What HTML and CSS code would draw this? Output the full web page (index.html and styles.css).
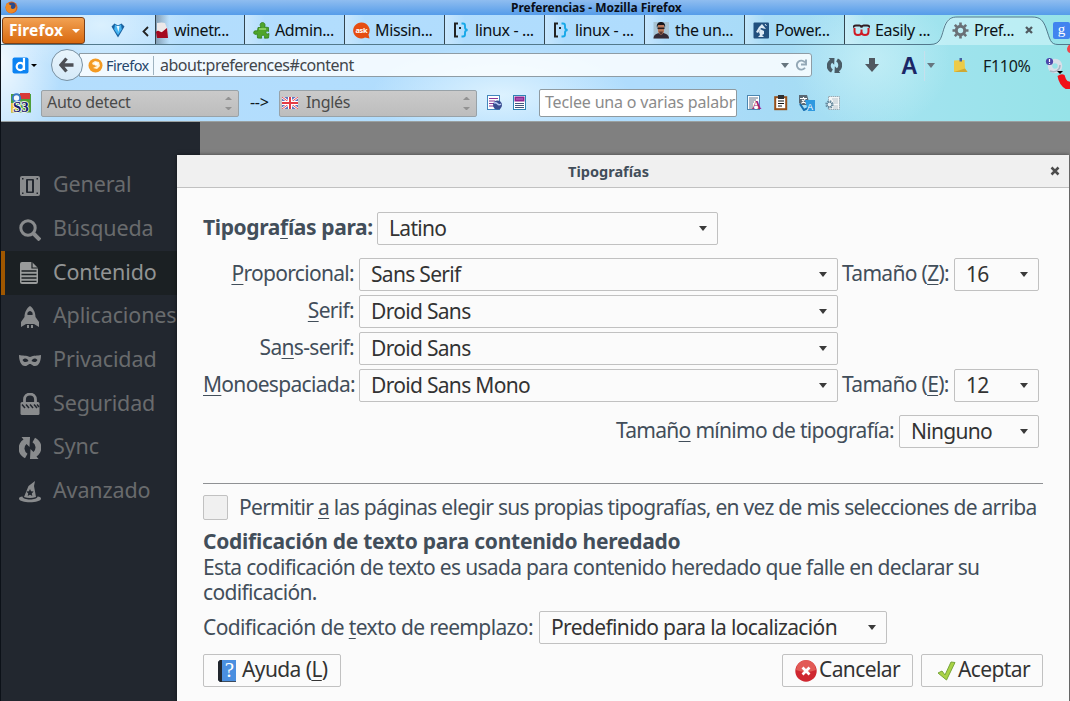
FILE: index.html
```html
<!DOCTYPE html>
<html lang="es">
<head>
<meta charset="utf-8">
<title>Preferencias - Mozilla Firefox</title>
<link rel="stylesheet" href="styles.css">
</head>
<body>
<div class="window">
  <header class="chrome">
    <div class="titlebar">
      <svg class="ff-logo" viewBox="0 0 13 13"><circle cx="6.500" cy="6.500" r="6" fill="#d9621b"/><circle cx="7" cy="5" r="3.600" fill="#2b4a8c"/><path d="M1 4c1-2 2-2 2.500-2 .5 2 2 2 3 2.500-1 1.500-1 3 1 3.500 2 0 3-1 3.500-3 1 3-1 7-5 7S0 8 1 4z" fill="#f08a24"/></svg>
      <span class="window-title">Preferencias - Mozilla Firefox</span>
    </div>
    <div class="tabstrip">
      <div class="app-button"><span>Firefox</span><i class="tri white"></i></div>
      <div class="pinned"><svg width="14" height="15" viewBox="0 0 14 15"><path d="M.5 3.500L3.500.5 7 2.500 10.500.5l3 3L10 9.500 7 14.500 4 9.500z" fill="#1a62a0"/><path d="M4 1.500l3 2 3-2 .8 5L7 12 3.200 6.500z" fill="#45b4f2"/><path d="M5.500 3h3L7.500 9z" fill="#e4f8ff"/></svg></div>
      <div class="scroll"><svg width="7" height="11" viewBox="0 0 7 11"><path d="M6 1L1.500 5.500 6 10" fill="none" stroke="#222" stroke-width="1.800"/></svg></div>
      <div class="tab first"><svg class="tico" viewBox="0 0 17 17"><path d="M1 1q5-1 8 0l3 8-5 3-6-3z" fill="#ece8e8"/><path d="M0 10c3-3 4 1 6 0s3-3 5-4l1 10H1z" fill="#a5091f"/></svg><span>winetr...</span></div>
      <div class="tab"><svg class="tico" viewBox="0 0 17 17"><path d="M5 5.500h3C6 2 8 .5 9.500.5S13 2 11.500 5l4 .5v4c-2-1-3 0-2.500 1.500s2 1 3 .5l-.5 4.500-4 .2c.6-2-.2-3-1.500-3s-2 1-1.300 3L4.500 16l-.3-4C2 13 .5 12 .7 10.300S3 8.500 4.500 9z" fill="#4fa52c" stroke="#2f7c17" stroke-width=".8"/><path d="M6 7h7" stroke="#9bdb70" stroke-width="1.500"/></svg><span>Admin...</span></div>
      <div class="tab"><svg class="tico" viewBox="0 0 17 17"><path d="M8.500.5a8 8 0 1 0 3.500 15l4.500 1-1-4A8 8 0 0 0 8.500.5z" fill="#e64d12"/><text x="8.300" y="11" text-anchor="middle" class="ask">ask</text></svg><span>Missin...</span></div>
      <div class="tab"><svg class="tico" viewBox="0 0 17 17"><path d="M5 1.500H2v13h3" fill="none" stroke="#222" stroke-width="2"/><rect x="6" y="5" width="2" height="2" fill="#222"/><path d="M8.500 1.500h1.500q2 0 2 2v2q0 2 2.500 2.500Q12 8.500 12 10.500v2q0 2-2 2H8.500" fill="none" stroke="#17a8e8" stroke-width="1.900"/></svg><span>linux - ...</span></div>
      <div class="tab"><svg class="tico" viewBox="0 0 17 17"><path d="M5 1.500H2v13h3" fill="none" stroke="#222" stroke-width="2"/><rect x="6" y="5" width="2" height="2" fill="#222"/><path d="M8.500 1.500h1.500q2 0 2 2v2q0 2 2.500 2.500Q12 8.500 12 10.500v2q0 2-2 2H8.500" fill="none" stroke="#17a8e8" stroke-width="1.900"/></svg><span>linux - ...</span></div>
      <div class="tab"><svg class="tico" viewBox="0 0 17 17"><rect x=".5" width="15.500" height="16.500" fill="#a8c4d4"/><path d="M.5 16.500c0-4 3-5 6-5.500h4c4 1 5.500 3 5.500 5.500z" fill="#352b36"/><path d="M5 3h6v7l-2 2.500H7L5 10z" fill="#ba7a5c"/><path d="M4 6c-1-5 2-6 4-6s5 1 4 6l-1-3H5z" fill="#17171c"/><path d="M4.500 5.500h7v1.600h-7z" fill="#281c1c"/><path d="M6 9.500h4L9 12H7z" fill="#5a3830"/></svg><span>the un...</span></div>
      <div class="tab"><svg class="tico" viewBox="0 0 17 17"><rect x=".5" y=".5" width="15.500" height="16" rx="1" fill="#21507e"/><path d="M9 2l4 5-5-1-3 5-2-1 3-5z" fill="#dceaf5"/><path d="M7 7l4 2v3l-2 1 2 2H5l2-2-1-3z" fill="#dceaf5"/><path d="M12 2l1.500 2" stroke="#dceaf5"/></svg><span>Power...</span></div>
      <div class="tab easily"><svg class="tico" viewBox="0 0 17 17"><path d="M1.500 6v3.500Q1.500 13 5 13t3.500-3.500V7.500v2Q8.500 13 12 13t3.500-3.500V6" fill="none" stroke="#cf1b25" stroke-width="2"/><path d="M0 5.500Q1 3.500 3 3.500h3.500q1.500 0 2 2 .5-2 2-2H14q2 0 3 2" fill="none" stroke="#321c22" stroke-width="2"/></svg><span>Easily ...</span></div>
      <div class="active-tab">
        <svg width="17" height="17" viewBox="-8.500 -8.500 17 17"><circle r="4.200" fill="none" stroke="#6a7076" stroke-width="3"/><path d="M0-8v2.500M0 8V5.500M-8 0h2.500M8 0H5.500M-5.700-5.700l2 2M5.700 5.700l-2-2M-5.700 5.700l2-2M5.700-5.700l-2 2" stroke="#6a7076" stroke-width="2.600"/></svg><span>Pref...</span><svg class="close-x" width="8" height="8" viewBox="0 0 8 8"><path d="M1 1l6 6M7 1L1 7" stroke="#505a60" stroke-width="2.300"/></svg>
      </div>
      <div class="google"><span>g</span></div>
      <svg class="tab-outline" width="1070" height="31" viewBox="0 0 1070 31"><path d="M930 30c12 0 10-10 14-20 3-7 7-8 12-8h76c8 0 11 3 14 11 4 11 4 17 12 17z" fill="#d8f7fb" opacity=".55"/><path d="M0 29.500h930c12 0 11-9 15-19 3-7 7-8.500 12-8.500h75c8 0 11 3 14 11 4 11 4 16.500 12 16.500h12" fill="none" stroke="#52798c" stroke-width="1"/></svg>
    </div>
    <div class="navbar">
      <div class="d-button"><svg width="17" height="17" viewBox="0 0 17 17"><rect x=".5" y=".5" width="16" height="16" rx="2" fill="#0d83f2"/><circle cx="8.300" cy="9.500" r="3.600" fill="none" stroke="#fff" stroke-width="2.200"/><path d="M12 1v12" stroke="#fff" stroke-width="2.200"/></svg><i class="tri black"></i></div>
      <div class="back"><svg width="16" height="16" viewBox="0 0 16 16"><path d="M7.500 1.500L2 8l5.500 6.500M2.500 8H14.500" fill="none" stroke="#4c4f55" stroke-width="3.300"/></svg></div>
      <div class="urlbar">
        <svg class="identity" width="15" height="15" viewBox="0 0 15 15"><circle cx="7.500" cy="7.500" r="7" fill="#f39a22"/><path d="M4 5l3-2 4 1 1 4-3 3-4-1 2-1 2-1-1-2-3 1z" fill="#fff3d8"/><circle cx="8" cy="6" r="1.800" fill="#fff"/></svg>
        <span class="id-name">Firefox</span>
        <span class="url">about:preferences#content</span>
        <i class="tri gray"></i>
        <svg width="12" height="12" viewBox="0 0 12 12"><path d="M10 3.500A4.500 4.500 0 1 0 10 8.700M6 5.500h5V.5" fill="none" stroke="#93a8b6" stroke-width="1.900"/></svg>
      </div>
      <svg class="sync-btn" viewBox="0 0 22 22"><path d="M11 0H2.500l2 2.600A10.500 10.500 0 0 0 4 20l2 1.200 2.500-4.500A6 6 0 0 1 7.500 7l3 3zM11 22h8.500l-2-2.600A10.500 10.500 0 0 0 18 2L16 .8l-2.500 4.500a6 6 0 0 1 1 9.700l-3-3z" fill="#4a5c66"/></svg>
      <svg class="down-btn" width="14" height="15" viewBox="0 0 14 15"><path d="M4 0h6v6h4l-7 8-7-8h4z" fill="#505860"/></svg>
      <span class="font-a">A</span>
      <span class="font-drop"><i class="tri gray"></i></span>
      <svg class="note" width="15" height="16" viewBox="0 0 15 16"><path d="M1 2.500L11.500 2l.5 8.500 2.500 3.500H1z" fill="#eccb49"/><path d="M1 14l11-3.500 2.500 3.500z" fill="#cfa935"/><path d="M6.500 0h2.500v3.500H6.500z" fill="#435fa0"/></svg>
      <span class="zoom">F110%</span>
      <svg class="throbber" width="26" height="46" viewBox="1044 42 26 46"><circle cx="1055" cy="65" r="5" fill="none" stroke="#d9dfe9" stroke-width="4.500"/><path d="M1050 70c6 2 10-1 10-6" fill="none" stroke="#a7b4c4" stroke-width="1.500"/><circle cx="1049.500" cy="60.500" r="3.600" fill="#4b46aa"/><path d="M1049.500 58v3M1049.500 62v1" stroke="#fff" stroke-width="1.200"/><path d="M1057 70h6l-3 3z" fill="#000"/><path d="M1057.500 75q4-3 7-1 1 4 3 6l3 1v9q-11-3-13-15z" fill="#f11119"/><path d="M1067 47.500q1-4 4-4.500v9q-4 0-4-4.500z" fill="#f24348"/></svg>
    </div>
    <div class="toolbar">
      <svg class="s3" width="20" height="20" viewBox="0 0 20 20"><rect x="0" y="1" width="20" height="18.500" fill="#4d9f3b"/><rect x="9" y="0" width="10" height="6" fill="#d83939"/><rect x="0" y="10" width="6" height="9.500" fill="#e7c33b"/><circle cx="5.500" cy="5" r="3.700" fill="#f3f8fe" stroke="#3c79c8" stroke-width="2"/><text x="2" y="18.500" class="s3-text">S3</text></svg>
      <div class="lang-select"><span>Auto detect</span><i class="spin"></i></div>
      <span class="arrow">--&gt;</span>
      <div class="lang-select"><svg width="16" height="12" viewBox="0 0 16 12"><rect width="16" height="12" fill="#6476be"/><path d="M0 0l16 12M16 0L0 12" stroke="#fff" stroke-width="2.500"/><path d="M0 0l16 12M16 0L0 12" stroke="#e55259"/><path d="M8 0v12M0 6h16" stroke="#fff" stroke-width="4"/><path d="M8 0v12M0 6h16" stroke="#e43a44" stroke-width="2"/></svg><span>Inglés</span><i class="spin"></i></div>
      <svg class="t1" width="16" height="16" viewBox="0 0 16 16"><rect x=".5" y=".5" width="12" height="14" fill="#fff" stroke="#4387bd"/><path d="M2 3.500h9M2 6h6M2 8.500h5M2 11h5" stroke="#8c3796" stroke-width="1.200"/><circle cx="10.500" cy="10" r="4.500" fill="#3b4d91"/><path d="M7 8c4-2 3 4 7 1" fill="none" stroke="#b8c8f1" stroke-width="1.500"/></svg>
      <svg class="t2" width="14" height="16" viewBox="0 0 14 16"><rect x=".5" y=".5" width="12" height="14" fill="#fff" stroke="#2f83b4"/><rect x="1.500" y="1.500" width="10" height="5" fill="#8d2793"/><path d="M2 8.500h9M2 10.500h9M2 12.500h9" stroke="#42587f"/><path d="M3 4h7" stroke="#c27ac5"/></svg>
      <div class="word-input">Teclee una o varias palabr</div>
      <svg class="t3" width="16" height="16" viewBox="0 0 16 16"><rect x=".5" y=".5" width="12" height="14" fill="#fff" stroke="#4b86b1"/><path d="M2 3h9M2 5h7M2 7h5M2 9h4M2 11h4M2 13h5" stroke="#62748b"/><text x="5" y="14" class="serif-a">A</text></svg>
      <svg class="t4" width="14" height="16" viewBox="0 0 14 16"><rect x="1.200" y="2.200" width="11" height="12" fill="#fff" stroke="#96501b" stroke-width="2"/><rect x="4" y="0" width="6" height="4" fill="#2d3034"/><path d="M4 6h6M4 8.500h6M4 11h4" stroke="#111" stroke-width="1.200"/></svg>
      <svg class="t5" width="16" height="16" viewBox="0 0 16 16"><path d="M0 0h8l3 10H2L0 8z" fill="#596873"/><path d="M1 3.500h7M4.500 2v2M2.500 8.500l4-5M3 5l4 3.500" fill="none" stroke="#fff" stroke-width="1.200"/><path d="M6 5h10v11H9z" fill="#2f9ae0"/><path d="M1 9l4 6 4-2" fill="none" stroke="#176eb0" stroke-width="2"/><text x="8" y="14.500" class="trans-a">A</text></svg>
      <svg class="t6" width="15" height="16" viewBox="0 0 15 16"><path d="M3.500 1.500h11v13h-11z" fill="#f4f7f8" stroke="#98abb4" stroke-dasharray="1.500 .6"/><path d="M7 4h6M8 6h5M9 8h4M9 11h4M8 13h5" stroke="#b6c3ca"/><circle cx="4.500" cy="9.500" r="3.200" fill="none" stroke="#67899d" stroke-width="2" stroke-dasharray="1.500 1"/><circle cx="4.500" cy="9.500" r="2.300" fill="#e8f3f8" stroke="#67899d"/></svg>
    </div>
  </header>

  <main class="content">
    <nav class="sidebar">
      <a class="item"><svg viewBox="0 0 22 22"><path d="M3 1h16a2 2 0 0 1 2 2v16a2 2 0 0 1-2 2H3a2 2 0 0 1-2-2V3a2 2 0 0 1 2-2z" fill="#898b8d"/><rect x="7" y="4" width="8" height="14" rx="1" fill="#22272f"/><rect x="9" y="5.500" width="4" height="11" fill="#898b8d"/><path d="M3 3h1.500v1.500H3zM17.500 3H19v1.500h-1.500zM3 17.500h1.500V19H3zM17.500 17.500H19V19h-1.500z" fill="#22272f"/></svg><span>General</span></a>
      <a class="item"><svg viewBox="0 0 22 22"><circle cx="9" cy="9" r="7.200" fill="none" stroke="#898b8d" stroke-width="3"/><path d="M14 14l7 7" stroke="#898b8d" stroke-width="4"/></svg><span>Búsqueda</span></a>
      <a class="item selected"><svg viewBox="0 0 22 22"><path d="M3 0h10l6 6v14a2 2 0 0 1-2 2H3a2 2 0 0 1-2-2V2a2 2 0 0 1 2-2z" fill="#999b9b"/><path d="M13 0v6h6" fill="none" stroke="#1b2023" stroke-width="1.200"/><path d="M2.500 9h15M2.500 12.500h15M2.500 16h15M2.500 19.300h15" stroke="#1b2023" stroke-width="1.300"/></svg><span>Contenido</span></a>
      <a class="item"><svg viewBox="0 0 22 22"><path d="M11 0C8 2 5.500 6 5.500 11L2 16v5l5-3h8l5 3v-5l-3.500-5C16.500 6 14 2 11 0z" fill="#898b8d"/><path d="M11 5a3 3 0 0 1 2.500 4h-5A3 3 0 0 1 11 5z" fill="#22272f"/><path d="M8 19h2v3H8zM12 19h2v3h-2z" fill="#898b8d"/></svg><span>Aplicaciones</span></a>
      <a class="item"><svg viewBox="0 0 22 22"><path d="M0 5c4 1 7 0 11 2 4-2 7-1 11-2 0 6-2 11-6 11-3 0-3-2-5-2s-2 2-5 2C2 16 0 11 0 5z" fill="#898b8d"/><path d="M3.500 10c3-3 5-1 6 1-3 2-5 1-6-1zM18.500 10c-3-3-5-1-6 1 3 2 5 1 6-1z" fill="#22272f"/></svg><span>Privacidad</span></a>
      <a class="item"><svg viewBox="0 0 22 22"><path d="M5.500 10V6.500a5.500 5.500 0 0 1 11 0V10" fill="none" stroke="#898b8d" stroke-width="2.800"/><rect x="1.500" y="9" width="19" height="13" rx="1.500" fill="#898b8d"/><path d="M3 11.500l3 3.500M7 11.500l3 3.500M11 11.500l3 3.500M15 11.500l3 3.500M18 11.500l2 2.500" stroke="#22272f" stroke-width="1.500"/></svg><span>Seguridad</span></a>
      <a class="item"><svg viewBox="0 0 22 22"><path d="M11 0H2.500l2 2.600A10.500 10.500 0 0 0 4 20l2 1.200 2.500-4.500A6 6 0 0 1 7.500 7l3 3zM11 22h8.500l-2-2.600A10.500 10.500 0 0 0 18 2L16 .8l-2.500 4.500a6 6 0 0 1 1 9.700l-3-3z" fill="#898b8d"/></svg><span>Sync</span></a>
      <a class="item"><svg viewBox="0 0 22 22"><path d="M5 16L9.500 5 16 0l-1 5 2 11q-6 2-12 0z" fill="#898b8d"/><path d="M11 8l1.100 2.300 2.500.3-1.800 1.800.5 2.600-2.300-1.200L8.700 15l.5-2.600-1.800-1.800 2.500-.3z" fill="#22272f"/><path d="M3.500 15.500c-2.500 0-3.500 1-3.500 2 0 5 22 5 22 0 0-1-1-2-3.500-2 0 4-15 4-15 0z" fill="#898b8d"/></svg><span>Avanzado</span></a>
    </nav>

    <section class="dialog">
      <div class="dialog-title"><span>Tipografías</span><svg width="10" height="10" viewBox="0 0 10 10"><path d="M1.500 1.500l7 7M8.500 1.500l-7 7" stroke="#4c4c4c" stroke-width="2.500"/></svg></div>
      <div class="dialog-body">
        <div class="row script-row"><b class="script-label">Tipogra<u>f</u>ías para:</b><div class="select script-select"><span>Latino</span><i class="tri"></i></div></div>
        <div class="fonts-grid">
          <label><u>P</u>roporcional:</label><div class="select"><span>Sans Serif</span><i class="tri"></i></div><label class="size">Tamaño (<u>Z</u>):</label><div class="select"><span>16</span><i class="tri"></i></div>
          <label><u>S</u>erif:</label><div class="select"><span>Droid Sans</span><i class="tri"></i></div><b></b><b></b>
          <label>Sa<u>n</u>s-serif:</label><div class="select"><span>Droid Sans</span><i class="tri"></i></div><b></b><b></b>
          <label><u>M</u>onoespaciada:</label><div class="select"><span>Droid Sans Mono</span><i class="tri"></i></div><label class="size">Tamaño (<u>E</u>):</label><div class="select"><span>12</span><i class="tri"></i></div>
        </div>
        <div class="row min-row"><label>Tamañ<u>o</u> mínimo de tipografía:</label><div class="select min-select"><span>Ninguno</span><i class="tri"></i></div></div>
        <div class="rule"></div>
        <div class="row check-row"><i class="checkbox"></i><label>Permitir <u>a</u> las páginas elegir sus propias tipografías, en vez de mis selecciones de arriba</label></div>
        <h2>Codificación de texto para contenido heredado</h2>
        <p>Esta codificación de texto es usada para contenido heredado que falle en declarar su<br>codificación.</p>
        <div class="row enc-row"><label>Codificación de <u>t</u>exto de reemplazo:</label><div class="select enc-select"><span>Predefinido para la localización</span><i class="tri"></i></div></div>
        <div class="row buttons">
          <div class="button help"><svg width="20" height="24" viewBox="0 0 20 24"><path d="M3 1h16v22H3L1 21V3z" fill="#3d4c5e"/><path d="M5 1h14v21H5z" fill="#4a8fe0"/><path d="M1 3l2-2h2v22H3l-2-2z" fill="#22272e"/><text x="12" y="18" text-anchor="middle" class="help-q">?</text></svg><span>Ayuda (<u>L</u>)</span></div>
          <div class="button cancel"><svg width="22" height="22" viewBox="0 0 22 22"><circle cx="11" cy="11" r="10.700" fill="#cf2730"/><path d="M1 10a10 10 0 0 1 20 0q-10 4-20 0z" fill="#e25a55"/><path d="M7.500 7.500l7 7M14.500 7.500l-7 7" stroke="#fff" stroke-width="2.700"/></svg><span>Cancelar</span></div>
          <div class="button accept"><svg width="19" height="20" viewBox="0 0 19 20"><path d="M1 12l4-2 3 4 6-13 4 .5L9.500 19z" fill="#a9d245" stroke="#77a63a"/></svg><span>Aceptar</span></div>
        </div>
      </div>
    </section>
  </main>
</div>
</body>
</html>
```
FILE: styles.css
```css
* { box-sizing: border-box; }
body { margin: 0; font-family: "Noto Sans", "Open Sans", sans-serif; }
svg { flex: none; display: block; }
.window { width: 1070px; height: 701px; overflow: hidden; border-left: 1px solid #0c1118; display: flex; flex-direction: column; }

/* browser chrome */
.chrome {
  height: 122px; flex: none; border-bottom: 1px solid #9aa0a0;
  background:
    radial-gradient(ellipse 60px 110px at 0 60px, rgba(255,255,255,.8), transparent),
    radial-gradient(ellipse 90px 50px at 100px 25px, rgba(235,248,255,.7), transparent),
    radial-gradient(ellipse 130px 50px at 500px 95px, rgba(225,244,255,.9), transparent),
    radial-gradient(ellipse 80px 70px at 870px 60px, rgba(205,242,248,.7), transparent),
    linear-gradient(90deg, #b5defd 0, #afdcfd 60%, #a7dbf6 72%, #a2e3ef 85%, #96e3e8 100%);
}
.titlebar { height: 15px; display: flex; align-items: center; background: linear-gradient(#8fbdf0, #559ce9); }
.ff-logo { width: 13px; height: 13px; margin-left: 4px; }
.window-title { margin-left: 493px; font-size: 12px; font-weight: 700; line-height: 15px; white-space: nowrap; letter-spacing: -.03px; color: #0a0f18; }
.tabstrip { height: 30px; display: flex; position: relative; font-size: 16px; color: #0c1216; }
.tab-outline { position: absolute; left: -1px; top: 0; z-index: 0; pointer-events: none; }
.app-button { width: 83px; height: 27px; margin: 2px 0 0 1px; padding: 0 4px 0 6px; border: 1px solid #7a401a; border-radius: 3px; background: linear-gradient(#f2a253, #d9690f); color: #fff; font-size: 15.500px; font-weight: 700; line-height: 24px; display: flex; align-items: center; justify-content: space-between; letter-spacing: .1px; }
.app-button span { padding-bottom: 1px; }
.tri { display: block; width: 0; height: 0; flex: none; border: 4.500px solid transparent; border-top: 5px solid #3a3a3a; border-bottom: 0; }
.tri.white { border-width: 4px; border-top-color: #fff; border-bottom: 0; }
.tri.black { border-width: 3px; border-top-color: #000; border-bottom: 0; }
.tri.gray { border-top-color: #66757e; }
.pinned { width: 54px; padding: 8px 0 0 26px; }
.scroll { width: 16px; padding: 11px 0 0 3px; }
.tab { width: 100px; height: 30px; display: flex; align-items: center; gap: 5px; padding-left: 8px; border-left: 1px solid #32444f; background: linear-gradient(90deg, rgba(255,255,255,.3), transparent 20%); white-space: nowrap; letter-spacing: -.37px; }
.tab.first { width: 89px; padding-left: 0; gap: 1px; background: linear-gradient(90deg, rgba(70,90,110,.5), transparent 15%); }
.tico { width: 17px; height: 17px; }
.active-tab { display: flex; align-items: center; width: 103px; padding-left: 8px; gap: 5px; position: relative; z-index: 1; letter-spacing: -.4px; }
.close-x { margin-left: 6px; }
.google { width: 17px; height: 17px; margin-top: 7px; margin-left: 6px; background: #4184ef; border-radius: 2px; color: #fff; font: 15px/14px "Liberation Serif", serif; text-align: center; flex: none; position: relative; z-index: 1; }
.ask { font: 700 7.500px "Noto Sans", sans-serif; fill: #fff; }

.navbar { height: 41px; display: flex; align-items: center; }
.d-button { width: 50px; padding-left: 11px; display: flex; align-items: center; gap: 2px; }
.back { width: 32px; height: 32px; border: 1px solid #7991a2; border-radius: 50%; background: linear-gradient(#e9f5fc, #d5e9f8); display: grid; place-items: center; flex: none; position: relative; z-index: 1; margin-bottom: 1px; }
.urlbar { width: 733px; height: 24px; margin-left: -4px; margin-bottom: 1px; border: 1px solid #8e9ca5; border-radius: 0 3px 3px 0; background: rgba(252,254,255,.86); display: flex; align-items: center; padding: 0 4px 0 8px; flex: none; color: #41464c; }
.id-name { width: 48px; height: 19px; margin-left: 3px; border-right: 1px solid #9eb3c0; font-size: 14.500px; line-height: 18px; letter-spacing: -.5px; color: #25466c; }
.url { margin-left: 6px; padding-bottom: 1px; font-size: 16px; line-height: 20px; letter-spacing: -.48px; flex: 1; }
.urlbar .tri { margin-right: 6px; }
.sync-btn { width: 15px; height: 15px; margin-left: 15px; }
.down-btn { margin-left: 23px; }
.font-a { width: 22px; margin-left: 22px; font: 700 23px/26px "Liberation Sans", sans-serif; color: #1b2767; }
.font-drop { width: 12px; height: 30px; display: flex; align-items: center; border-left: 1px solid #c5e0ec; padding-left: 2px; flex: none; margin-left: 1px; }
.note { margin-left: 17px; }
.zoom { margin-left: 15px; width: 48px; font-size: 16px; letter-spacing: -.3px; color: #111c22; }
.throbber { margin-left: 13px; margin-right: -4px; }

.toolbar { height: 35px; display: flex; align-items: center; padding-bottom: 1px; }
.s3 { margin-left: 10px; margin-right: 10px; }
.s3-text { font: 700 15px "Liberation Serif", serif; fill: #16206b; stroke: #fff; stroke-width: 1.500px; paint-order: stroke; }
.lang-select { width: 198px; height: 27px; border: 1px solid #98a2a8; border-radius: 2px; background: linear-gradient(#cacaca, #bdbdbd); display: flex; align-items: center; padding: 0 6px 0 5px; font-size: 16px; letter-spacing: -.3px; line-height: 22px; color: #4a4a4a; flex: none; }
.lang-select span { padding-bottom: 2px; }
.lang-select svg { margin: 0 8px 0 -3px; }
.spin { margin-left: auto; width: 7px; height: 13px; display: flex; flex-direction: column; justify-content: space-between; }
.spin::before { content: ""; border: 3px solid transparent; border-top: 0; border-bottom-color: #929292; }
.spin::after { content: ""; border: 3px solid transparent; border-bottom: 0; border-top-color: #929292; }
.arrow { width: 40px; padding: 0 0 2px 11px; font-size: 16px; letter-spacing: -.3px; line-height: 20px; color: #0f1820; }
.t1 { margin-left: 10px; }
.t2 { margin-left: 10px; }
.word-input { width: 198px; height: 28px; margin-left: 12px; border: 1px solid #8f9aa0; border-radius: 2px; background: #fff; padding: 0 0 0 5px; white-space: nowrap; font-size: 16px; line-height: 24px; letter-spacing: -.17px; color: #8b8b8b; flex: none; }
.t3 { margin-left: 10px; }
.t4 { margin-left: 11px; }
.t5 { margin-left: 11px; }
.t6 { margin-left: 10px; }
.serif-a { font: 700 13px "Liberation Serif", serif; fill: #9b236f; }
.trans-a { font: 9px "Liberation Sans", sans-serif; fill: #fff; }

/* preferences page */
.content { flex: 1; position: relative; background: #808080; }
.sidebar { width: 199px; height: 579px; padding-top: 42px; background: #22272f; }
.item { height: 43.700px; display: flex; align-items: center; gap: 12px; padding-left: 18px; font-size: 21.500px; line-height: 30px; letter-spacing: -.13px; color: #696b6d; }
.item svg { width: 22px; height: 22px; }
.item span { padding-bottom: 3px; }
.item.selected { background: #1b2023; color: #929494; border-left: 4px solid #a05700; padding-left: 14px; }

/* fonts dialog */
.dialog { position: absolute; left: 176px; top: 33px; width: 892px; height: 560px; background: #fbfbfb; color: #424e5a; font-size: 21px; box-shadow: 0 0 4px rgba(0,0,0,.5); }
.dialog-title { height: 33px; border-bottom: 1px solid #c1c1c1; background: #f0f0f0; display: flex; align-items: center; justify-content: flex-end; padding-right: 9px; }
.dialog-title span { margin-right: 401px; font-size: 14.500px; font-weight: 700; }
.dialog-body { padding: 24px 26px 0; }
.row { display: flex; align-items: center; height: 33px; white-space: nowrap; }
.script-label { width: 174px; letter-spacing: -.36px; padding-bottom: 3px; }
.select { height: 33px; border: 1px solid #c1c1c1; border-radius: 2px; display: flex; align-items: center; justify-content: space-between; padding: 0 10px 0 11px; color: #333; white-space: nowrap; flex: none; line-height: 30px; }
.select span { padding-bottom: 1px; }
.script-select { width: 341px; }
.fonts-grid { display: grid; grid-template-columns: 151px 479px 107px 85px; grid-auto-rows: 33px; row-gap: 4px; column-gap: 5px; margin: 13px 0 0 0; white-space: nowrap; }
.fonts-grid label { text-align: right; line-height: 30px; }
.fonts-grid .size { text-align: left; margin-left: -1px; }
.fonts-grid .size + .select { margin-left: -1px; margin-right: 1px; }
u { text-decoration-thickness: 1px; text-underline-offset: 3px; }
label, .select, .button, p { letter-spacing: -.69px; }
.button { letter-spacing: -.6px; }
.min-row { margin-top: 13px; justify-content: flex-end; padding-right: 4px; gap: 5px; }
.min-row label { padding-bottom: 3px; }
.min-select { width: 140px; }
.rule { height: 1px; margin-top: 35px; background: #8f9194; }
.check-row { height: 25px; margin-top: 11px; gap: 11px; }
.check-row label { padding-bottom: 2px; letter-spacing: -.71px; }
.checkbox { width: 25px; height: 25px; border: 1px solid #c1c1c1; border-radius: 2px; background: #f0f0f0; flex: none; }
h2 { margin: 8px 0 0; font-size: 21px; line-height: 27px; letter-spacing: -.27px; white-space: nowrap; }
p { margin: 0; line-height: 25px; letter-spacing: -.67px; white-space: nowrap; }
.enc-row { margin-top: 6px; }
.enc-row label { width: 336px; padding-bottom: 1px; letter-spacing: -.62px; }
.enc-select { width: 348px; letter-spacing: -.63px; }
.buttons { margin-top: 10px; }
.button { height: 33px; border: 1px solid #c1c1c1; border-radius: 2px; display: flex; align-items: center; color: #333; flex: none; line-height: 28px; }
.button span { padding-bottom: 3px; }
.help { width: 138px; padding-left: 13px; gap: 5px; }
.help-q { font: 21px "Liberation Serif", serif; fill: #fff; }
.cancel { width: 131px; margin-left: auto; padding-left: 12px; gap: 2px; }
.accept { width: 122px; margin-left: 8px; padding-left: 15px; gap: 2px; }
```
